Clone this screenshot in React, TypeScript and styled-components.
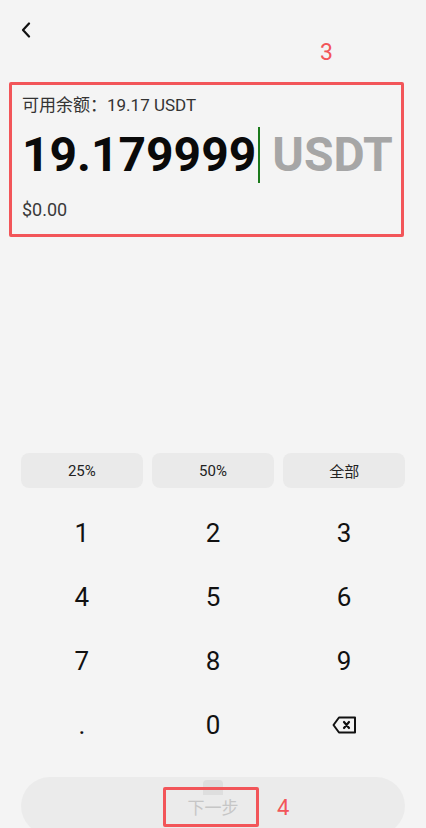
import React, {useState} from 'react';
import styled, {createGlobalStyle} from 'styled-components';

const GlobalStyle = createGlobalStyle`
  html, body {
    margin: 0;
    padding: 0;
    background: #f4f4f4;
  }
  * { box-sizing: border-box; }
`

const Page = styled.div`
  position: relative;
  width: 426px;
  height: 828px;
  overflow: hidden;
  background: #f4f4f4;
  font-family: Roboto, "Noto Sans CJK SC", sans-serif;
  color: #111;
  display: flex;
  flex-direction: column;
`

const Header = styled.div`
  height: 82px;
  position: relative;
  padding: 21px 0 0 20px;
`

const BackButton = styled.button`
  border: none;
  background: none;
  padding: 0;
  width: 12px;
  height: 18px;
  display: flex;
  align-items: center;
  justify-content: center;
`

const MarkLabel = styled.span<{ $left: number; $top: number; $size: number }>`
  position: absolute;
  left: ${p => p.$left}px;
  top: ${p => p.$top}px;
  font-family: Roboto, sans-serif;
  font-size: ${p => p.$size}px;
  line-height: 1;
  color: #f25559;
`

const AmountCard = styled.section`
  margin: 0 22px 0 9px;
  height: 155px;
  border: 3px solid #f25559;
  border-radius: 2px;
  padding: 9px 0 0 10px;
`

const Balance = styled.div`
  font-family: Roboto, "Noto Sans CJK SC", sans-serif;
  font-size: 17px;
  line-height: 22px;
  color: #333;
`

const AmountRow = styled.div`
  display: flex;
  align-items: center;
  height: 66px;
  margin-top: 6px;
`

const AmountValue = styled.span<{ $muted?: boolean }>`
  flex-shrink: 0;
  font-family: Roboto, sans-serif;
  font-weight: 700;
  font-size: 48px;
  line-height: 1;
  color: ${p => (p.$muted ? '#a6a6a6' : '#0a0a0a')};
`

const Caret = styled.span`
  flex-shrink: 0;
  width: 2px;
  height: 56px;
  margin: 0 12px 0 2px;
  background: #1b7a1b;
`

const Fiat = styled.div`
  margin-top: 11px;
  font-size: 18px;
  line-height: 22px;
  color: #3a3a3a;
`

const Spacer = styled.div`
  flex: 1;
`

const Keypad = styled.div`
  padding: 0 21px;
`

const QuickRow = styled.div`
  display: grid;
  grid-template-columns: repeat(3, 1fr);
  gap: 9.5px;
  margin-bottom: 13px;
`

const QuickButton = styled.button`
  height: 35px;
  border: none;
  border-radius: 8px;
  background: #eaeaea;
  font-family: Roboto, "Noto Sans CJK SC", sans-serif;
  font-size: 15px;
  color: #222;
`

const KeyGrid = styled.div`
  display: grid;
  grid-template-columns: repeat(3, 1fr);
  gap: 0 9.5px;
`

const Key = styled.button`
  height: 64px;
  border: none;
  background: none;
  font-family: Roboto, sans-serif;
  font-size: 26px;
  color: #111;
  display: flex;
  align-items: center;
  justify-content: center;
`

const NextButton = styled.button`
  position: relative;
  margin: 20px 21px 0;
  height: 58px;
  border: none;
  border-radius: 29px;
  background: #ebebeb;
  font-family: "Noto Sans CJK SC", sans-serif;
  font-size: 17px;
  color: #c6c6c6;
  display: flex;
  justify-content: center;
  padding-top: 17px;
  margin-bottom: -7px;
`

const Ghost = styled.span`
  position: absolute;
  left: 182px;
  top: 3px;
  width: 20px;
  height: 15px;
  border-radius: 4px 4px 0 0;
  background: #dedede;
`

const MarkBox = styled.span`
  position: absolute;
  left: 142px;
  top: 10px;
  width: 96px;
  height: 40px;
  border: 3px solid #f25559;
  border-radius: 2px;
`

const BackIcon = () => (
  <svg width="10" height="16" viewBox="0 0 10 16" fill="none">
    <path d="M8 1.5L2 8l6 6.5" stroke="#111" strokeWidth="2.2" strokeLinecap="round" strokeLinejoin="round"/>
  </svg>
)

const DeleteIcon = () => (
  <svg width="25" height="18" viewBox="0 0 25 18" fill="none">
    <path d="M7 1.5h16v15H7L1.5 9z" stroke="#111" strokeWidth="2" strokeLinejoin="round"/>
    <path d="M12 6l5 6M17 6l-5 6" stroke="#111" strokeWidth="2.2" strokeLinecap="round"/>
  </svg>
)

const keys = ['1', '2', '3', '4', '5', '6', '7', '8', '9', '.', '0', 'del']
const quick = ['25%', '50%', '全部']

const App = () => {
  const [amount, setAmount] = useState('19.179999')

  const press = (k: string) => {
    if (k === 'del') setAmount(amount.slice(0, -1))
    else setAmount(amount + k)
  }

  return (
    <Page>
      <GlobalStyle/>
      <Header>
        <BackButton><BackIcon/></BackButton>
        <MarkLabel $left={320} $top={41} $size={23}>3</MarkLabel>
      </Header>

      <AmountCard>
        <Balance>可用余额：19.17 USDT</Balance>
        <AmountRow>
          <AmountValue>{amount}</AmountValue>
          <Caret/>
          <AmountValue $muted>USDT</AmountValue>
        </AmountRow>
        <Fiat>$0.00</Fiat>
      </AmountCard>

      <Spacer/>

      <Keypad>
        <QuickRow>
          {quick.map(q => <QuickButton key={q}>{q}</QuickButton>)}
        </QuickRow>
        <KeyGrid>
          {keys.map(k => (
            <Key key={k} onClick={() => press(k)}>
              {k === 'del' ? <DeleteIcon/> : k}
            </Key>
          ))}
        </KeyGrid>
      </Keypad>

      <NextButton>
        <Ghost/>
        下一步
        <MarkBox/>
        <MarkLabel $left={256} $top={20} $size={22}>4</MarkLabel>
      </NextButton>
    </Page>
  );
};

export default App;
